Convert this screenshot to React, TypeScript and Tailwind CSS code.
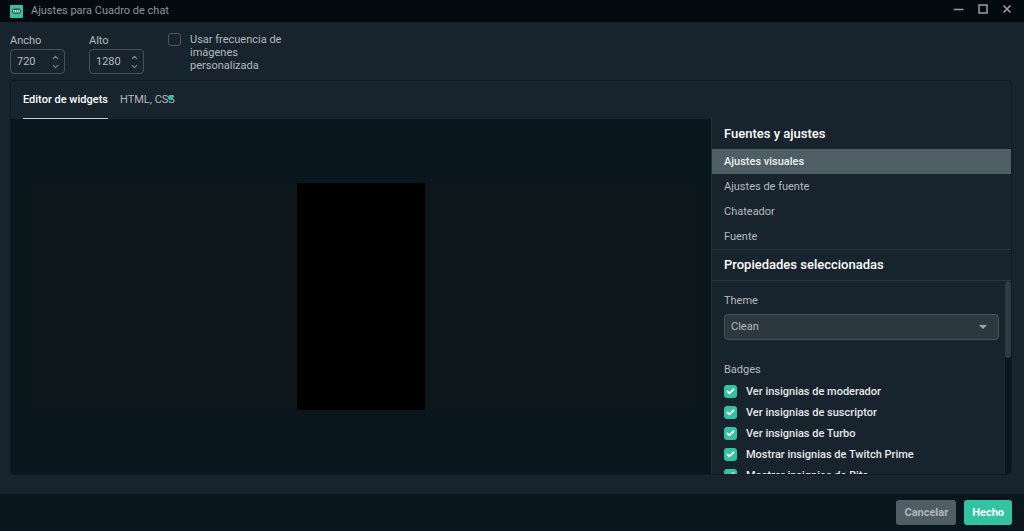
import React, { useState } from 'react';
import { Check, ChevronDown, ChevronUp } from 'lucide-react';

const sources = ['Ajustes visuales', 'Ajustes de fuente', 'Chateador', 'Fuente'];

const badges = [
  'Ver insignias de moderador',
  'Ver insignias de suscriptor',
  'Ver insignias de Turbo',
  'Mostrar insignias de Twitch Prime',
  'Mostrar insignias de Bits',
];

const NumberField = ({ id, label, value }: { id: string; label: string; value: string }) => (
  <div className="w-[55px]">
    <label htmlFor={id} className="block h-4">{label}</label>
    <div className="flex h-[25px] items-center rounded border border-[#46525a] pr-1">
      <input id={id} defaultValue={value} className="w-full min-w-0 bg-transparent pl-1.5 outline-none" />
      <span className="flex flex-col text-[#7d888e]">
        <button aria-label={`Aumentar ${label}`}><ChevronUp size={9} strokeWidth={3} /></button>
        <button aria-label={`Reducir ${label}`}><ChevronDown size={9} strokeWidth={3} /></button>
      </span>
    </div>
  </div>
);

const Badge = ({ label }: { label: string }) => (
  <label className="flex h-[21px] items-center gap-[9px] font-medium text-[#e6e8e9]">
    <span className="grid size-[13px] shrink-0 place-items-center">
      <input type="checkbox" defaultChecked className="peer col-start-1 row-start-1 size-[13px] appearance-none rounded-[3px] bg-[#2f3c44] checked:bg-[#31c3a2]" />
      <Check size={9} strokeWidth={5} className="pointer-events-none invisible col-start-1 row-start-1 text-white peer-checked:visible" />
    </span>
    {label}
  </label>
);

const TitleBar = () => (
  <header className="flex h-[22px] shrink-0 items-center bg-[#030a0f] pr-3 pl-2.5 text-[#8f9598]">
    <svg viewBox="0 0 13 13" className="mr-2 size-[13px]">
      <rect width="13" height="13" rx="1" fill="#31c3a2" />
      <path d="M2 6.2C2 3.8 3.8 3.2 6.5 3.2S11 3.8 11 6.2 9.2 9 6.5 9 2 8.6 2 6.2Z" fill="#36595a" />
      <rect x="3" y="5" width="7" height="2.4" rx="1" fill="#b9d0ce" />
      <path d="M4.5 5.5v1.4M6.5 5.5v1.4M8.5 5.5v1.4" stroke="#36595a" strokeWidth=".7" />
    </svg>
    <h1 className="flex-1">Ajustes para Cuadro de chat</h1>
    <div className="flex h-full items-start gap-3.5 pt-1 text-[#999fa2]">
      <button aria-label="Minimizar">
        <svg viewBox="0 0 10 10" className="size-2.5"><path d="M0 5.5h9.5" stroke="currentColor" strokeWidth="1.5" /></svg>
      </button>
      <button aria-label="Maximizar">
        <svg viewBox="0 0 10 10" className="size-2.5"><rect x="1" y="1" width="8" height="8" fill="none" stroke="currentColor" strokeWidth="1.5" /></svg>
      </button>
      <button aria-label="Cerrar">
        <svg viewBox="0 0 10 10" className="size-2.5"><path d="M1.5 1.5l7 7m0-7l-7 7" stroke="currentColor" strokeWidth="1.6" /></svg>
      </button>
    </div>
  </header>
);

const App = () => {
  const [tab, setTab] = useState('Editor de widgets');
  const [selected, setSelected] = useState(sources[0]);

  return (
    <div className="flex h-screen flex-col overflow-hidden bg-[#18242d] font-['Roboto',sans-serif] text-[11px] leading-4 text-[#b5babd]">
      <TitleBar />

      {/* Size settings */}
      <div className="flex shrink-0 gap-6 px-2.5 pt-[11px] pb-1.5">
        <NumberField id="ancho" label="Ancho" value="720" />
        <NumberField id="alto" label="Alto" value="1280" />
        <label className="flex w-32 items-start gap-[9px] leading-[13px]">
          <input type="checkbox" className="size-[13px] shrink-0 appearance-none rounded-[3px] border border-[#4b575e] checked:bg-[#31c3a2]" />
          <span>Usar frecuencia de imágenes personalizada</span>
        </label>
      </div>

      <main className="mr-3 mb-[19px] ml-2.5 flex min-h-0 flex-1 flex-col overflow-hidden rounded border border-[#101a21]">
        <nav className="flex h-[38px] shrink-0 gap-3 px-3">
          {['Editor de widgets', 'HTML, CSS'].map((item) => (
            <button
              key={item}
              onClick={() => setTab(item)}
              className={`relative border-b ${tab === item ? 'border-[#c5cacc] font-medium text-white' : 'border-transparent'}`}
            >
              {item}
              {item === 'HTML, CSS' && <span className="absolute top-3.5 right-0.5 size-[5px] rounded-full bg-[#31c3a2]" />}
            </button>
          ))}
        </nav>

        <div className="flex min-h-0 flex-1">
          {/* Widget preview */}
          <section className="flex flex-1 items-center bg-[#09161d] px-3.5">
            <div className="flex flex-1 justify-center bg-[#0c171c]">
              <div className="aspect-9/16 w-32 bg-black" />
            </div>
          </section>

          <aside className="flex w-[300px] flex-col border-l border-[#232f37]">
            <h2 className="shrink-0 px-3 py-[7px] text-[13px] font-medium text-white">Fuentes y ajustes</h2>
            <ul className="shrink-0">
              {sources.map((item) => (
                <li key={item}>
                  <button
                    onClick={() => setSelected(item)}
                    className={`h-[25px] w-full px-3 text-left ${selected === item ? 'bg-[#4f5e65] font-medium text-[#f0f2f2]' : ''}`}
                  >
                    {item}
                  </button>
                </li>
              ))}
            </ul>
            <h2 className="shrink-0 border-y border-[#2a363e] px-3 py-[7px] text-[13px] font-medium text-white">Propiedades seleccionadas</h2>

            <div className="flex min-h-0 flex-1">
              <div className="flex-1 overflow-hidden pt-3 pr-1.5 pl-3">
                <label htmlFor="theme" className="block">Theme</label>
                <div className="mt-[5px] grid items-center">
                  <select id="theme" className="col-start-1 row-start-1 h-[26px] appearance-none rounded border border-[#46535a] bg-[#2d3940] px-1.5">
                    <option>Clean</option>
                  </select>
                  <svg viewBox="0 0 8 4" className="pointer-events-none col-start-1 row-start-1 mr-3 h-1 w-2 justify-self-end"><path d="M0 0h8L4 4Z" fill="#9fa5a8" /></svg>
                </div>
                <fieldset className="mt-[22px]">
                  <legend className="mb-[3px]">Badges</legend>
                  {badges.map((badge) => <Badge key={badge} label={badge} />)}
                </fieldset>
              </div>
              <div className="w-1.5 bg-[#0a161d]">
                <div className="h-2/5 rounded-full bg-[#2f3b43]" />
              </div>
            </div>
          </aside>
        </div>
      </main>

      <footer className="flex shrink-0 justify-end gap-2 bg-[#09161d] px-3 py-1.5 font-bold">
        <button className="h-[25px] rounded-[3px] bg-[#4f5e65] px-2 text-[#b0b8bb]">Cancelar</button>
        <button className="h-[25px] rounded-[3px] bg-[#31c3a2] px-2 text-white">Hecho</button>
      </footer>
    </div>
  );
};

export default App;
